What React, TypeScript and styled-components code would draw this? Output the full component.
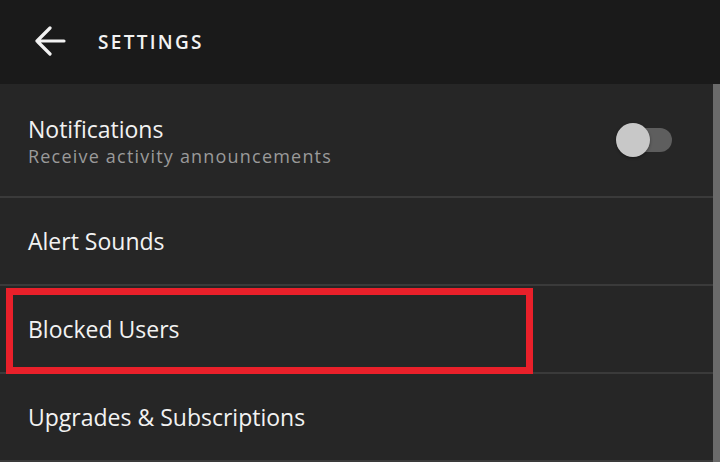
import styled, { createGlobalStyle } from "styled-components";

const GlobalStyle = createGlobalStyle`
    html, body {
        margin: 0;
        padding: 0;
        background: #262626;
    }
    body {
        font-family: "Open Sans", "Lato", sans-serif;
    }
`;

const BackArrow = () => (
    <svg width="32" height="30" viewBox="0 0 32 30" fill="none">
        <path
            d="M16 2 L3 15 L16 28 M3 15 H30"
            stroke="#f2f2f2"
            strokeWidth="3.2"
            strokeLinecap="round"
            strokeLinejoin="round"
        />
    </svg>
);

const Toggle = ({ on }: { on: boolean }) => (
    <ToggleTrack $on={on}>
        <ToggleThumb $on={on} />
    </ToggleTrack>
);

const rows = ["Alert Sounds", "Blocked Users", "Upgrades & Subscriptions"];

const App = () => {
    return (
        <>
            <GlobalStyle />
            <Page>
                <Header>
                    <BackButton>
                        <BackArrow />
                    </BackButton>
                    <HeaderTitle>SETTINGS</HeaderTitle>
                </Header>
                <Body>
                    <List>
                        <Row $tall>
                            <RowText>
                                <RowTitle>Notifications</RowTitle>
                                <RowSubtitle>Receive activity announcements</RowSubtitle>
                            </RowText>
                            <Toggle on={false} />
                        </Row>
                        {rows.map(label => (
                            <Row key={label}>
                                <RowTitle>{label}</RowTitle>
                                {label === "Blocked Users" && <Highlight />}
                            </Row>
                        ))}
                    </List>
                    <Scrollbar />
                </Body>
            </Page>
        </>
    );
};

// --- Styled Components ---

const Page = styled.div`
    display: flex;
    flex-direction: column;
    width: 720px;
    height: 462px;
    overflow: hidden;
    background: #262626;
`;

const Header = styled.header`
    display: flex;
    align-items: center;
    height: 84px;
    flex-shrink: 0;
    padding-left: 34px;
    background: #1a1a1a;
    box-sizing: border-box;
`;

const BackButton = styled.div`
    display: flex;
    align-items: center;
    width: 64px;
    margin-top: -2px;
`;

const HeaderTitle = styled.h1`
    margin: 0;
    font-size: 19px;
    font-weight: 600;
    letter-spacing: 2.3px;
    color: #f2f2f2;
`;

const Body = styled.div`
    display: flex;
    flex: 1;
`;

const List = styled.div`
    display: flex;
    flex-direction: column;
    flex: 1;
`;

const Row = styled.div<{ $tall?: boolean }>`
    position: relative;
    display: flex;
    align-items: center;
    justify-content: space-between;
    height: ${props => (props.$tall ? "112px" : "86px")};
    padding: 0 41px 0 28px;
    border-bottom: 2px solid #3a3a3a;
    flex-shrink: 0;
`;

const RowText = styled.div`
    display: flex;
    flex-direction: column;
    margin-top: 1px;
`;

const RowTitle = styled.span`
    font-size: 23px;
    line-height: 30px;
    color: #f2f2f2;
`;

const RowSubtitle = styled.span`
    font-size: 18px;
    line-height: 24px;
    letter-spacing: 1.2px;
    color: #9a9a9a;
`;

const ToggleTrack = styled.div<{ $on: boolean }>`
    position: relative;
    width: 52px;
    height: 24px;
    border-radius: 12px;
    background: ${props => (props.$on ? "#b32026" : "#5e5e5e")};
`;

const ToggleThumb = styled.div<{ $on: boolean }>`
    position: absolute;
    top: -5px;
    left: ${props => (props.$on ? "20px" : "-4px")};
    width: 34px;
    height: 34px;
    border-radius: 50%;
    background: #c8c8c8;
    box-shadow: 0 1px 3px rgba(0, 0, 0, 0.4);
`;

const Highlight = styled.div`
    position: absolute;
    left: 6px;
    top: 2px;
    width: 527px;
    height: 86px;
    border: 7px solid #e8202a;
    box-sizing: border-box;
    pointer-events: none;
`;

const Scrollbar = styled.div`
    width: 7px;
    flex-shrink: 0;
    background: #6a6a6a;
`;

export default App;
